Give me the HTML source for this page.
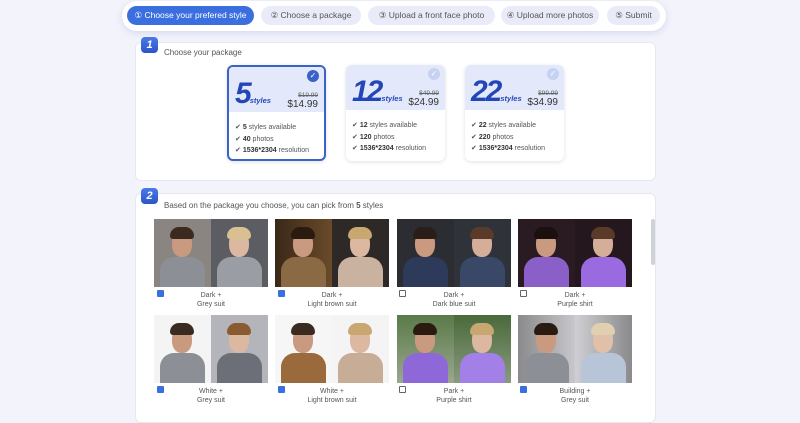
<!DOCTYPE html>
<html><head><meta charset="utf-8"><style>
*{box-sizing:border-box;margin:0;padding:0}
body{width:800px;height:407px;overflow:hidden;background:#f3f4fb;font-family:"Liberation Sans",sans-serif;color:#444;position:relative}
.nav{position:absolute;left:122px;top:1px;width:544px;height:30px;background:#fff;border-radius:15px;box-shadow:0 2px 8px rgba(120,130,200,.25)}
.pill{position:absolute;top:5px;height:19px;border-radius:10px;background:#e9ecf8;color:#555;font-size:8.5px;line-height:19px;text-align:center}
.pill.on{background:#3b6fe0;color:#fff}
.card{position:absolute;left:135px;width:521px;background:#fff;border:1px solid #e6e8f0;border-radius:6px}
.badge{position:absolute;width:17px;height:16px;border-radius:4px;background:linear-gradient(#4a7ae8,#2c55c8);color:#fff;font-style:italic;font-weight:bold;font-size:11px;text-align:center;line-height:16px}
.t{position:absolute;font-size:8px;color:#555}
.pkg{position:absolute;top:65px;width:99px;height:96px;border-radius:6px;background:#fff;box-shadow:0 1px 4px rgba(0,0,0,.12);overflow:hidden}
.pkg.sel{border:2px solid #3a62c8}
.pkg .top{position:absolute;left:0;top:0;right:0;height:45px;background:#e3e9fb}
.pkg .n{position:absolute;left:6px;top:10px;font-size:30px;font-weight:bold;font-style:italic;color:#2447b8;letter-spacing:-2px}
.pkg .n small{font-size:7.5px;letter-spacing:0}
.pkg .old{position:absolute;right:6px;top:25px;font-size:6.5px;text-decoration:line-through;color:#666}
.pkg .pr{position:absolute;right:6px;top:32px;font-size:10px;color:#333}
.pkg .chk{position:absolute;right:5px;top:3px;width:12px;height:12px;border-radius:50%;background:#c6d2f2;color:#fff;font-size:8px;text-align:center;line-height:12px}
.pkg.sel .chk{background:#3a62c8}
.pkg ul{position:absolute;left:6px;top:55px;list-style:none;font-size:7px;line-height:11.5px;color:#555}
.pkg b{color:#333}
.ph{position:absolute;width:114px;height:68px;overflow:hidden}
.h{position:absolute;top:0;width:57px;height:68px;overflow:hidden}
.hd{position:absolute;left:18px;top:12px;width:20px;height:26px;border-radius:45%;background:#c99a80}
.hr{position:absolute;left:16px;top:8px;width:24px;height:12px;border-radius:12px 12px 4px 4px}
.bd{position:absolute;left:6px;top:38px;width:45px;height:34px;border-radius:14px 14px 0 0}
.lb{position:absolute;width:114px;font-size:7px;color:#555;text-align:center;line-height:9px}
.cb{position:absolute;width:7px;height:7px;border:1px solid #666;border-radius:1px;background:#fff}
.cb.on{background:#3b6fe0;border-color:#3b6fe0}
</style></head><body>
<div class="nav">
<div class="pill on" style="left:5px;width:127px">① Choose your prefered style</div>
<div class="pill" style="left:139px;width:100px">② Choose a package</div>
<div class="pill" style="left:246px;width:127px">③ Upload a front face photo</div>
<div class="pill" style="left:379px;width:98px">④ Upload more photos</div>
<div class="pill" style="left:485px;width:53px">⑤ Submit</div>
</div>

<div class="card" style="top:42px;height:139px"></div>
<div class="badge" style="left:141px;top:37px">1</div>
<div class="t" style="left:164px;top:48px">Choose your package</div>

<div class="pkg sel" style="left:227px"><div class="top"></div><div class="chk">✓</div><div class="n">5<small>styles</small></div><div class="old">$19.99</div><div class="pr">$14.99</div>
<ul><li>✔ <b>5</b> styles available</li><li>✔ <b>40</b> photos</li><li>✔ <b>1536*2304</b> resolution</li></ul></div>
<div class="pkg" style="left:346px"><div class="top"></div><div class="chk">✓</div><div class="n">12<small>styles</small></div><div class="old">$49.99</div><div class="pr">$24.99</div>
<ul><li>✔ <b>12</b> styles available</li><li>✔ <b>120</b> photos</li><li>✔ <b>1536*2304</b> resolution</li></ul></div>
<div class="pkg" style="left:465px"><div class="top"></div><div class="chk">✓</div><div class="n">22<small>styles</small></div><div class="old">$99.99</div><div class="pr">$34.99</div>
<ul><li>✔ <b>22</b> styles available</li><li>✔ <b>220</b> photos</li><li>✔ <b>1536*2304</b> resolution</li></ul></div>

<div class="card" style="top:193px;height:230px"></div>
<div class="badge" style="left:141px;top:188px">2</div>
<div class="t" style="left:164px;top:201px">Based on the package you choose, you can pick from <b>5</b> styles</div>
<div style="position:absolute;left:651px;top:219px;width:4px;height:46px;background:#d0d2da;border-radius:2px"></div>

<!-- row 1 -->
<div class="ph" style="left:154px;top:219px">
 <div class="h" style="left:0;background:#8a8580"><div class="bd" style="background:#8c8f96"></div><div class="hd"></div><div class="hr" style="background:#3a2a20"></div></div>
 <div class="h" style="left:57px;background:#5c5d62"><div class="bd" style="background:#9a9da4"></div><div class="hd" style="background:#dcb8a0"></div><div class="hr" style="background:#d8c090"></div></div></div>
<div class="ph" style="left:275px;top:219px">
 <div class="h" style="left:0;background:linear-gradient(90deg,#3a2818,#6a4a2a)"><div class="bd" style="background:#8a6a45"></div><div class="hd"></div><div class="hr" style="background:#2a1a10"></div></div>
 <div class="h" style="left:57px;background:#2e2826"><div class="bd" style="background:#c9b3a0"></div><div class="hd" style="background:#dcb8a0"></div><div class="hr" style="background:#c8a870"></div></div></div>
<div class="ph" style="left:397px;top:219px">
 <div class="h" style="left:0;background:#2b2d33"><div class="bd" style="background:#2e3a5a"></div><div class="hd"></div><div class="hr" style="background:#2a1e18"></div></div>
 <div class="h" style="left:57px;background:#30323a"><div class="bd" style="background:#3a4868"></div><div class="hd" style="background:#d4ae98"></div><div class="hr" style="background:#5a3a28"></div></div></div>
<div class="ph" style="left:518px;top:219px">
 <div class="h" style="left:0;background:#2a1a22"><div class="bd" style="background:#8a60c8"></div><div class="hd"></div><div class="hr" style="background:#1a1010"></div></div>
 <div class="h" style="left:57px;background:#24181e"><div class="bd" style="background:#9a6ae0"></div><div class="hd" style="background:#d4ae98"></div><div class="hr" style="background:#5a3a28"></div></div></div>

<div class="cb on" style="left:157px;top:290px"></div><div class="lb" style="left:154px;top:291px">Dark +<br>Grey suit</div>
<div class="cb on" style="left:278px;top:290px"></div><div class="lb" style="left:275px;top:291px">Dark +<br>Light brown suit</div>
<div class="cb" style="left:399px;top:290px"></div><div class="lb" style="left:397px;top:291px">Dark +<br>Dark blue suit</div>
<div class="cb" style="left:520px;top:290px"></div><div class="lb" style="left:518px;top:291px">Dark +<br>Purple shirt</div>

<!-- row 2 -->
<div class="ph" style="left:154px;top:315px">
 <div class="h" style="left:0;background:#f4f4f4"><div class="bd" style="background:#8c8f96"></div><div class="hd"></div><div class="hr" style="background:#3a2a20"></div></div>
 <div class="h" style="left:57px;background:#b4b5ba"><div class="bd" style="background:#6c6f78"></div><div class="hd" style="background:#dcb8a0"></div><div class="hr" style="background:#8a5a30"></div></div></div>
<div class="ph" style="left:275px;top:315px">
 <div class="h" style="left:0;background:#f6f6f6"><div class="bd" style="background:#9a6a3c"></div><div class="hd"></div><div class="hr" style="background:#3a2a20"></div></div>
 <div class="h" style="left:57px;background:#f4f4f4"><div class="bd" style="background:#c8ad96"></div><div class="hd" style="background:#dcb8a0"></div><div class="hr" style="background:#c8a870"></div></div></div>
<div class="ph" style="left:397px;top:315px">
 <div class="h" style="left:0;background:linear-gradient(#5a7a48,#9aa890)"><div class="bd" style="background:#8e68d8"></div><div class="hd"></div><div class="hr" style="background:#2a1a10"></div></div>
 <div class="h" style="left:57px;background:linear-gradient(#4a6a3a,#8a9a80)"><div class="bd" style="background:#a280e8"></div><div class="hd" style="background:#dcb8a0"></div><div class="hr" style="background:#c8a870"></div></div></div>
<div class="ph" style="left:518px;top:315px">
 <div class="h" style="left:0;background:linear-gradient(90deg,#8a8a8c,#c8c8cc)"><div class="bd" style="background:#8c8f96"></div><div class="hd"></div><div class="hr" style="background:#2a1a10"></div></div>
 <div class="h" style="left:57px;background:linear-gradient(90deg,#d0d0d4,#8a8a8c)"><div class="bd" style="background:#b8c4d8"></div><div class="hd" style="background:#e0c0a8"></div><div class="hr" style="background:#e0d0b0"></div></div></div>

<div class="cb on" style="left:157px;top:386px"></div><div class="lb" style="left:154px;top:387px">White +<br>Grey suit</div>
<div class="cb on" style="left:278px;top:386px"></div><div class="lb" style="left:275px;top:387px">White +<br>Light brown suit</div>
<div class="cb" style="left:399px;top:386px"></div><div class="lb" style="left:397px;top:387px">Park +<br>Purple shirt</div>
<div class="cb on" style="left:520px;top:386px"></div><div class="lb" style="left:518px;top:387px">Building +<br>Grey suit</div>
</body></html>
